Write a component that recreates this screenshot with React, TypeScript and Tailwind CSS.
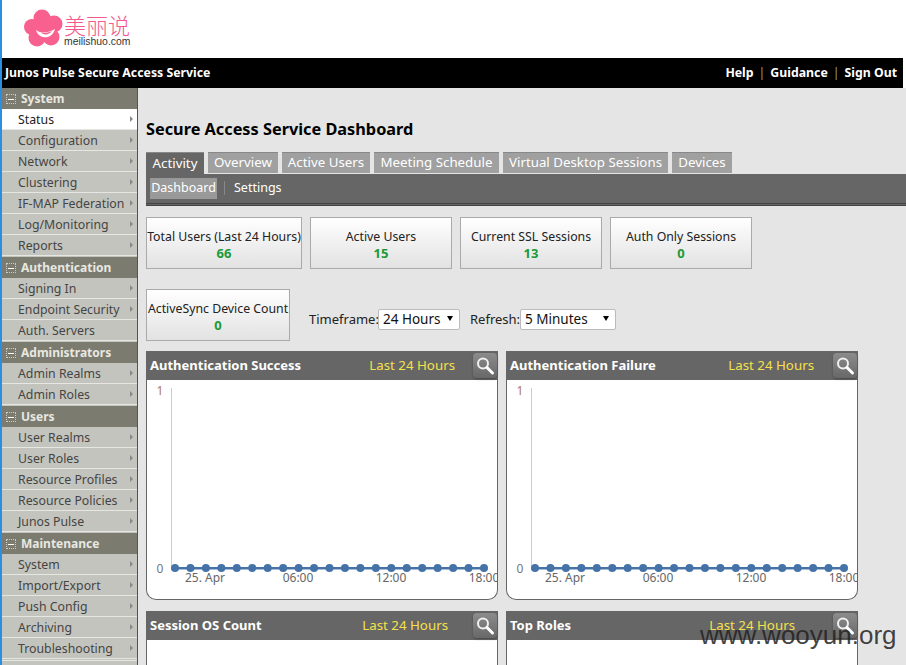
const SECTIONS = [
  { title: 'System', items: ['Status', 'Configuration', 'Network', 'Clustering', 'IF-MAP Federation', 'Log/Monitoring', 'Reports'] },
  { title: 'Authentication', items: ['Signing In', 'Endpoint Security', 'Auth. Servers'] },
  { title: 'Administrators', items: ['Admin Realms', 'Admin Roles'] },
  { title: 'Users', items: ['User Realms', 'User Roles', 'Resource Profiles', 'Resource Policies', 'Junos Pulse'] },
  { title: 'Maintenance', items: ['System', 'Import/Export', 'Push Config', 'Archiving', 'Troubleshooting'] },
];

const NO_ARROW = ['Auth. Servers'];

const TABS = [
  { label: 'Activity', width: 'w-[58px]' },
  { label: 'Overview', width: 'w-[70px]' },
  { label: 'Active Users', width: 'w-[88px]' },
  { label: 'Meeting Schedule', width: 'w-[125px]' },
  { label: 'Virtual Desktop Sessions', width: 'w-[165px]' },
  { label: 'Devices', width: 'w-[60px]' },
];

const POINTS = Array.from({ length: 21 }, (_, i) => 28 + i * 15.45);

function Logo() {
  return (
    <div className="flex h-[58px] items-center pl-[22px]">
      <svg width="39" height="38" viewBox="0 0 39 38" className="mt-[-3px]">
        <g fill="#f8608f">
          <circle cx="18" cy="9" r="8.5" />
          <circle cx="8" cy="18" r="8" />
          <circle cx="30" cy="15" r="8.5" />
          <circle cx="13" cy="29" r="8.5" />
          <circle cx="27" cy="28" r="8.5" />
          <circle cx="19" cy="19" r="10" />
        </g>
        <path d="M12 21 C18 25 24 24 31 20 C29 27 24 29 19 28 C16 27.5 13 25 12 21 Z" fill="#fff" />
        <path d="M17 23.5 C21 24.5 25 23.5 28 22 C25 26 20 26.5 17 23.5 Z" fill="#f8608f" />
      </svg>
      <div className="ml-[1px] flex flex-col items-start">
        <span className="font-['Noto_Sans_CJK_SC',sans-serif] text-[22px] leading-[26px] font-light text-[#f4588c]">美丽说</span>
        <span className="font-['Liberation_Sans',sans-serif] text-[10.4px] leading-[10px] text-[#333]">meilishuo.com</span>
      </div>
    </div>
  );
}

function Sidebar() {
  return (
    <div className="w-[136px] shrink-0 overflow-hidden border-r border-[#4b555c] bg-[#c4c4be]">
      {SECTIONS.map((section, n) => (
        <div key={section.title}>
          <div className={`flex h-[21px] items-center bg-[#7b7b70] pt-px pl-[4px] ${n > 0 ? 'mt-px' : ''}`}>
            <span className="flex h-[10px] w-[10px] items-center justify-center border border-dotted border-[#ccc]">
              <span className="h-px w-[6px] bg-white" />
            </span>
            <span className="ml-[5px] text-[12px] font-bold text-[#e8e8e0]">{section.title}</span>
          </div>
          {section.items.map((item) => {
            const active = n === 0 && item === 'Status';
            return (
              <div
                key={item}
                className={`flex h-[21px] items-center justify-between border-b border-[#e6e6e2] pt-[3px] pr-[4px] pl-[16px] text-[12.3px] whitespace-nowrap ${
                  active ? 'bg-white text-[#222]' : 'text-[#444]'
                }`}
              >
                <span>{item}</span>
                {!NO_ARROW.includes(item) && (
                  <span className="mb-[3px] h-0 w-0 border-y-[3px] border-l-[3px] border-y-transparent border-l-[#888]" />
                )}
              </div>
            );
          })}
        </div>
      ))}
      <div className="mt-px h-[10px] border-t border-[#e6e6e2]" />
    </div>
  );
}

function StatBox({ label, value, width }: { label: string; value: string; width: string }) {
  return (
    <div className={`flex h-[52px] ${width} shrink-0 flex-col items-center justify-center border border-[#aaa] bg-gradient-to-b from-white to-[#e2e2e2] pt-[4px]`}>
      <span className="text-[12.3px] leading-[16px] whitespace-nowrap text-[#222]">{label}</span>
      <span className="text-[13px] leading-[16px] font-bold text-[#1c9a36]">{value}</span>
    </div>
  );
}

function Dropdown({ value, width }: { value: string; width: string }) {
  return (
    <div className={`flex h-[21px] ${width} items-center justify-between rounded-[2px] border border-[#bbb] bg-white pr-[6px] pl-[4px] text-[13.5px] text-[#111]`}>
      <span>{value}</span>
      <span className="mb-[3px] h-0 w-0 border-x-[3px] border-t-[5px] border-x-transparent border-t-black" />
    </div>
  );
}

function ChartCard({ title, rangeGap }: { title: string; rangeGap: string }) {
  return (
    <div className="w-[352px]">
      <CardHeader title={title} rangeGap={rangeGap} />
      <div className="h-[220px] overflow-hidden rounded-b-[10px] border border-t-0 border-[#666] bg-white">
        <svg width="350" height="219" className="font-['Noto_Sans',sans-serif]">
          <line x1="24.5" y1="8" x2="24.5" y2="188" stroke="#c0d0e0" />
          <line x1="24" y1="189.5" x2="338" y2="189.5" stroke="#a8bcd8" />
          <line x1="28" y1="188" x2="337" y2="188" stroke="#4572a7" strokeWidth="2" />
          {POINTS.map((x) => (
            <circle key={x} cx={x} cy="188" r="4" fill="#4572a7" />
          ))}
          <text x="13" y="15" fontSize="12" fill="#b0784a" textAnchor="middle">1</text>
          <text x="13" y="193" fontSize="12" fill="#777" textAnchor="middle">0</text>
          <g fontSize="12" fill="#666" textAnchor="middle">
            <text x="58" y="202">25. Apr</text>
            <text x="151" y="202">06:00</text>
            <text x="244" y="202">12:00</text>
            <text x="337" y="202">18:00</text>
          </g>
        </svg>
      </div>
    </div>
  );
}

function CardHeader({ title, rangeGap }: { title: string; rangeGap: string }) {
  return (
    <div className="flex h-[29px] items-center bg-[#666] pr-px pl-[4px]">
      <span className="text-[13px] font-bold text-white">{title}</span>
      <span className={`ml-auto ${rangeGap} text-[13.3px] text-[#f5e14a]`}>Last 24 Hours</span>
      <span className="flex h-[25px] w-[24px] items-center justify-center rounded-[4px] bg-gradient-to-b from-[#8c8c8c] to-[#686868] shadow-[0_1px_2px_#444]">
        <svg width="22" height="22" viewBox="0 0 22 22" fill="none">
          <circle cx="9" cy="8.5" r="5" stroke="#f0f0f0" strokeWidth="2" />
          <line x1="13" y1="12.5" x2="18.5" y2="18" stroke="#fff" strokeWidth="3" strokeLinecap="round" />
        </svg>
      </span>
    </div>
  );
}

function Dashboard() {
  return (
    <div className="min-w-0 flex-1 overflow-hidden bg-[#e5e5e5] pl-[8px]">
      <h1 className="mt-[29px] text-[16.3px] leading-[24px] font-bold text-black">Secure Access Service Dashboard</h1>
      <div className="mt-[11px] flex h-[22px] items-start gap-[4px]">
        {TABS.map((tab, i) => (
          <div
            key={tab.label}
            className={`flex ${tab.width} items-center justify-center border-t border-[#888] text-[13.3px] whitespace-nowrap text-white ${
              i === 0 ? 'h-[22px] bg-[#666]' : 'h-[21px] bg-[#a0a0a0]'
            }`}
          >
            {tab.label}
          </div>
        ))}
      </div>
      <div className="flex h-[32px] items-center border-b-[3px] border-double border-[#444] bg-[#666] pb-px pl-[4px] text-[12.5px] text-white">
        <span className="flex h-[21px] w-[67px] items-center justify-center bg-[#999]">Dashboard</span>
        <span className="mx-[7px] h-[14px] w-px bg-[#888]" />
        <span className="ml-[2px]">Settings</span>
      </div>
      <div className="mt-[11px] flex gap-[8px]">
        <StatBox label="Total Users (Last 24 Hours)" value="66" width="w-[156px]" />
        <StatBox label="Active Users" value="15" width="w-[142px]" />
        <StatBox label="Current SSL Sessions" value="13" width="w-[142px]" />
        <StatBox label="Auth Only Sessions" value="0" width="w-[142px]" />
      </div>
      <div className="mt-[20px] flex items-start">
        <StatBox label="ActiveSync Device Count" value="0" width="w-[144px]" />
        <div className="mt-[20px] flex items-center text-[13px] text-[#222]">
          <span className="ml-[19px] w-[69px]">Timeframe:</span>
          <Dropdown value="24 Hours" width="w-[82px]" />
          <span className="ml-[10px] w-[50px]">Refresh:</span>
          <Dropdown value="5 Minutes" width="w-[96px]" />
        </div>
      </div>
      <div className="mt-[10px] flex gap-[8px]">
        <ChartCard title="Authentication Success" rangeGap="mr-[18px]" />
        <ChartCard title="Authentication Failure" rangeGap="mr-[19px]" />
      </div>
      <div className="mt-[11px] flex gap-[8px]">
        <div className="w-[352px]">
          <CardHeader title="Session OS Count" rangeGap="mr-[25px]" />
          <div className="h-[80px] border-x border-[#666] bg-white" />
        </div>
        <div className="w-[352px]">
          <CardHeader title="Top Roles" rangeGap="mr-[38px]" />
          <div className="h-[80px] border-x border-[#666] bg-white" />
        </div>
      </div>
    </div>
  );
}

export default function App() {
  return (
    <div className="relative h-[665px] w-[906px] overflow-hidden border-l-2 border-[#2a8fe0] bg-white font-['Noto_Sans',sans-serif]">
      <Logo />
      <div className="mr-[3px] flex h-[30px] items-center justify-between bg-black px-[3px] text-[12.3px] font-bold text-white">
        <span>Junos Pulse Secure Access Service</span>
        <span className="mr-[3px] flex gap-[5px]">
          <span>Help</span>
          <span className="font-normal text-[#999]">|</span>
          <span>Guidance</span>
          <span className="font-normal text-[#999]">|</span>
          <span>Sign Out</span>
        </span>
      </div>
      <div className="flex h-[577px]">
        <Sidebar />
        <Dashboard />
      </div>
      <span className="absolute top-[618px] left-[698px] font-['Liberation_Sans',sans-serif] text-[26px] leading-[34px] text-[#222]/85">www.wooyun.org</span>
    </div>
  );
}
